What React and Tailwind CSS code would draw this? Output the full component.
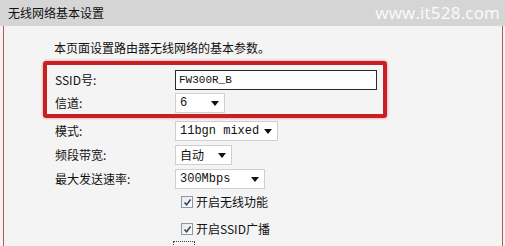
import React from 'react';

const cjk = { fontFamily: '"Noto Sans CJK SC", "Noto Sans", sans-serif' };
const mono = { fontFamily: '"Liberation Mono", "Noto Sans CJK SC", monospace' };

function Arrow() {
    return (
        <svg width="8" height="5" viewBox="0 0 8 5" className="shrink-0">
            <path d="M0 0 H8 L4 5 Z" fill="#111" />
        </svg>
    );
}

function Select({ value, width }) {
    return (
        <div
            className="h-[20px] bg-white border border-[#cfcfcf] flex items-center justify-between pl-[4px] pr-[5px] text-[12px] text-[#111]"
            style={{ width, ...mono }}
        >
            <span style={/[\u4e00-\u9fa5]/.test(value) ? cjk : mono}>{value}</span>
            <Arrow />
        </div>
    );
}

function Check({ label }) {
    return (
        <div className="h-[18px] flex items-center gap-[3px] pl-[126px]">
            <div className="w-[12px] h-[12px] border border-[#8b9aa9] bg-gradient-to-br from-[#e4e8ec] to-white flex items-center justify-center">
                <svg width="9" height="9" viewBox="0 0 9 9">
                    <path d="M1.5 4.5 L3.6 6.8 L7.6 1.6" stroke="#34465a" strokeWidth="1.6" fill="none" />
                </svg>
            </div>
            <span className="text-[12px] text-[#111]" style={cjk}>{label}</span>
        </div>
    );
}

function Row({ label, children }) {
    return (
        <div className="flex items-center">
            <span className="w-[120px] text-[12px] text-[#111]" style={cjk}>{label}</span>
            {children}
        </div>
    );
}

export default function App() {
    return (
        <div className="w-[505px] h-[246px] overflow-hidden bg-[#f7f3f3] flex flex-col">
            {/* title bar */}
            <div className="h-[26px] bg-[#d5d5d5] flex items-center justify-between pl-[8px] pr-[5px] shrink-0">
                <span className="text-[12px] text-[#111]" style={cjk}>无线网络基本设置</span>
                <span className="text-[17px] text-white/90 tracking-[0.2px]" style={{ fontFamily: '"Open Sans", sans-serif' }}>www.it528.com</span>
            </div>

            <div className="flex-1 ml-[3px] mr-[2px] border-l border-r border-[#a7595c] bg-[#f4f4f4] pt-[14px]">
                <p className="pl-[50px] text-[12px] leading-[16px] text-[#111]" style={cjk}>本页面设置路由器无线网络的基本参数。</p>

                <div className="ml-[39px] mt-[5px] w-[344px] border-[4px] border-[#c71f22] rounded-[3px] shadow-[0_0_3px_rgba(230,60,60,0.6)] pl-[8px] pt-[5px] pb-[1px] flex flex-col gap-[3px]">
                    <Row label="SSID号:">
                        <div className="w-[202px] h-[20px] bg-white border border-[#2a2a2a] flex items-center pl-[3px] text-[11px] text-[#111]" style={mono}>FW300R_B</div>
                    </Row>
                    <Row label="信道:">
                        <Select value="6" width={50} />
                    </Row>
                </div>

                <div className="pl-[51px] mt-[3px] flex flex-col gap-[4px]">
                    <Row label="模式:">
                        <Select value="11bgn mixed" width={103} />
                    </Row>
                    <Row label="频段带宽:">
                        <Select value="自动" width={57} />
                    </Row>
                    <Row label="最大发送速率:">
                        <Select value="300Mbps" width={90} />
                    </Row>
                </div>

                <div className="pl-[51px] mt-[4px] flex flex-col gap-[9px]">
                    <Check label="开启无线功能" />
                    <Check label="开启SSID广播" />
                </div>
                <div className="ml-[169px] mt-[3px] w-[22px] h-[10px] border border-dotted border-[#444]" />
            </div>
        </div>
    );
}
